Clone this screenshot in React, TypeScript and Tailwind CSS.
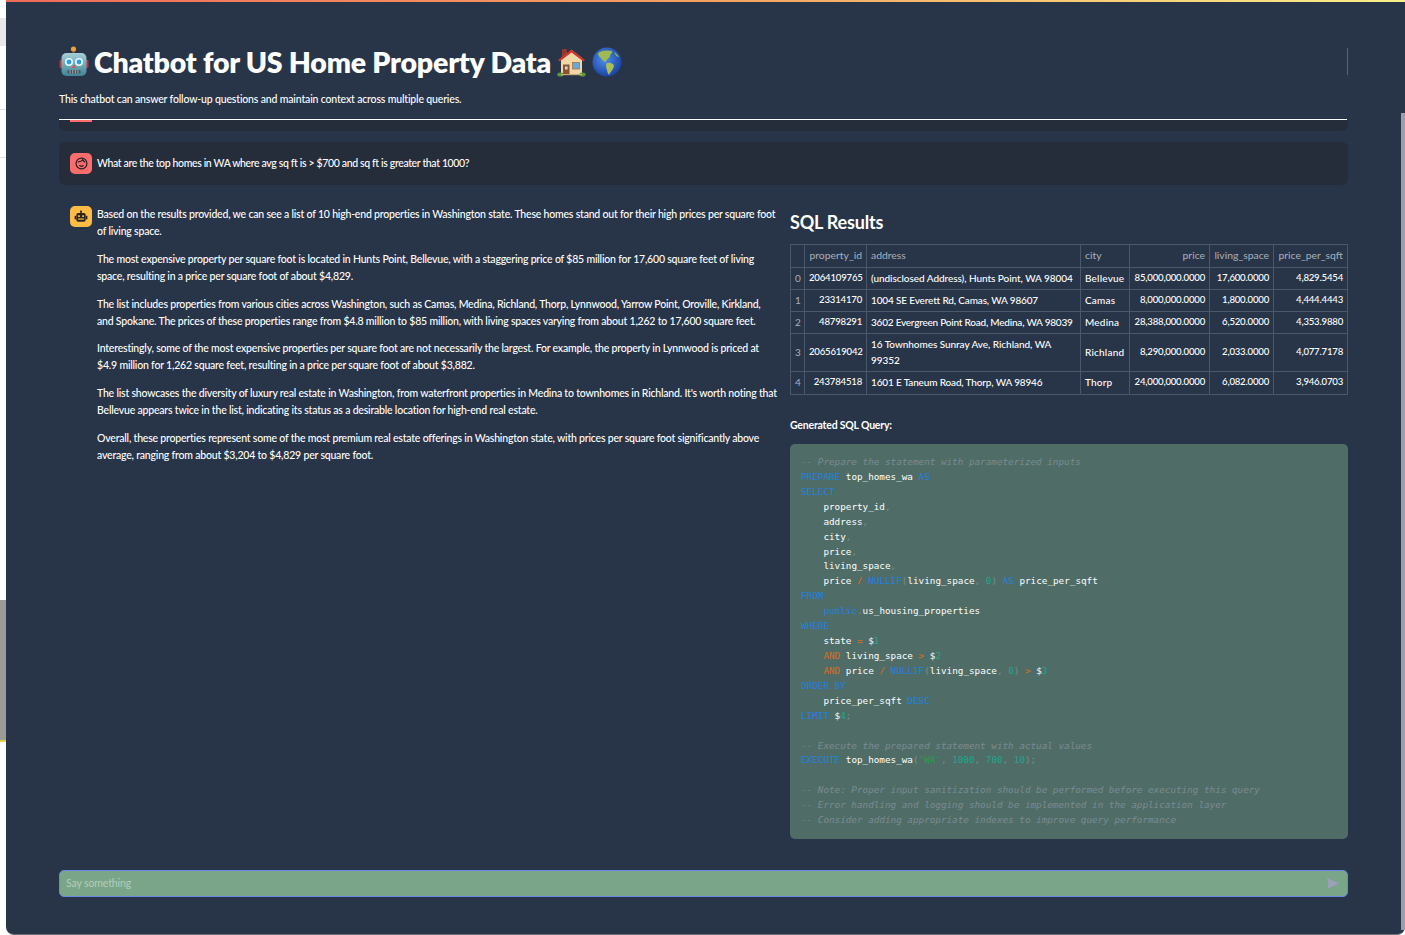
import React from 'react'

const sans = "font-['Lato','Noto_Sans',sans-serif]"

function RobotEmoji() {
  return (
    <svg width="30" height="32" viewBox="0 0 30 32" className="shrink-0">
      <defs>
        <linearGradient id="head" x1="0" y1="0" x2="0" y2="1">
          <stop offset="0" stopColor="#a5cfd6" />
          <stop offset="1" stopColor="#3f8496" />
        </linearGradient>
      </defs>
      <rect x="13.6" y="3" width="1.8" height="5" fill="#8a5a2b" />
      <circle cx="14.5" cy="3" r="2.6" fill="#f0a030" />
      <rect x="0.5" y="14" width="3" height="8" rx="1" fill="#b03a3a" />
      <rect x="26.5" y="14" width="3" height="8" rx="1" fill="#b03a3a" />
      <rect x="2.5" y="7" width="25" height="23" rx="5" fill="url(#head)" />
      <circle cx="10" cy="16" r="4" fill="#e8f6fa" />
      <circle cx="20" cy="16" r="4" fill="#e8f6fa" />
      <circle cx="10" cy="16" r="2.4" fill="#2da0e0" />
      <circle cx="20" cy="16" r="2.4" fill="#2da0e0" />
      <path d="M15 18.5 L17 22 L13 22 Z" fill="#d9534f" />
      <rect x="8.5" y="24" width="13" height="3.4" rx="1" fill="#47545c" />
      <path d="M11 24v3.4M13.7 24v3.4M16.4 24v3.4M19 24v3.4" stroke="#b8c4c8" strokeWidth="0.8" />
    </svg>
  )
}

function HouseEmoji() {
  return (
    <svg width="29" height="30" viewBox="0 0 29 30" className="shrink-0">
      <rect x="5" y="2" width="5" height="8" fill="#8f3a30" />
      <path d="M4 11 L14.5 3 L25 11 L25 27 L4 27 Z" fill="#f1d6a8" />
      <path d="M1 13 L14.5 2.5 L28 13 L26.5 14.5 L14.5 5.5 L2.5 14.5 Z" fill="#c9362f" />
      <rect x="6" y="17.5" width="6.5" height="10" fill="#8a5230" />
      <rect x="8" y="19.5" width="2.6" height="3" fill="#c9dbe4" />
      <rect x="15.5" y="15.5" width="7" height="6.5" fill="#6aa7d6" stroke="#a5764a" strokeWidth="0.8" />
      <ellipse cx="3.5" cy="27.5" rx="3.2" ry="2" fill="#5d9a3c" />
      <ellipse cx="25.5" cy="27.5" rx="3.2" ry="2" fill="#5d9a3c" />
      <rect x="4" y="27" width="21" height="1.2" fill="#c8a878" />
    </svg>
  )
}

function GlobeEmoji() {
  return (
    <svg width="30" height="30" viewBox="0 0 30 30" className="shrink-0">
      <defs>
        <radialGradient id="sea" cx="0.42" cy="0.4" r="0.65">
          <stop offset="0" stopColor="#4f8ff0" />
          <stop offset="1" stopColor="#173f9c" />
        </radialGradient>
      </defs>
      <circle cx="15" cy="15" r="14.5" fill="url(#sea)" />
      <path d="M6 6 C10 3 16 3 20 4 C21 6 18 7 18 9 C17 12 14 12 14 15 C12 15 10 13 9 11 C7 10 6 8 6 6 Z" fill="#9dbb4e" />
      <path d="M15 16 C18 15 22 17 22 19 C21 23 18 25 17 28 C15 26 15 22 14 20 C14 18 14 17 15 16 Z" fill="#a9bf55" />
      <path d="M22 5 C24 6 26 8 27 10 C25 10 23 8 22 5 Z" fill="#8fb04a" />
    </svg>
  )
}

function UserAvatar() {
  return (
    <div className="flex h-[21px] w-[22px] shrink-0 items-center justify-center rounded-[5px] bg-[#ff6c6c]">
      <svg width="13" height="13" viewBox="0 0 24 24" fill="none" stroke="#1f1f2b" strokeWidth="2.2" strokeLinecap="round">
        <circle cx="12" cy="12" r="10" />
        <path d="M6 9c3 0 6-1 8-4 1 2 2 3 4 4" />
        <path d="M9 16c2 1.5 4 1.5 6 0" />
      </svg>
    </div>
  )
}

function BotAvatar() {
  return (
    <div className="flex h-[21px] w-[22px] shrink-0 items-center justify-center rounded-[5px] bg-[#ffbd45]">
      <svg width="14" height="14" viewBox="0 0 24 24">
        <rect x="4" y="5" width="16" height="15" rx="3" fill="#2b2620" />
        <rect x="1" y="10" width="3" height="6" fill="#2b2620" />
        <rect x="20" y="10" width="3" height="6" fill="#2b2620" />
        <rect x="10.5" y="1" width="3" height="4" fill="#2b2620" />
        <rect x="7" y="9" width="3" height="3" fill="#ffbd45" />
        <rect x="14" y="9" width="3" height="3" fill="#ffbd45" />
        <rect x="7" y="14.5" width="10" height="2" fill="#ffbd45" />
      </svg>
    </div>
  )
}

const K = ({ children }: { children: React.ReactNode }) => <span className="text-[#1f80e0]">{children}</span>
const C = ({ children }: { children: React.ReactNode }) => <span className="italic text-[#7c8a94]">{children}</span>
const N = ({ children }: { children: React.ReactNode }) => <span className="text-[#1ea592]">{children}</span>
const P = ({ children }: { children: React.ReactNode }) => <span className="text-[#7a8e90]">{children}</span>
const O = ({ children }: { children: React.ReactNode }) => <span className="text-[#dc6c1c]">{children}</span>

const rows = [
  { i: 0, id: '2064109765', address: '(undisclosed Address), Hunts Point, WA 98004', addrCls: 'tracking-[-0.05px]', city: 'Bellevue', price: '85,000,000.0000', space: '17,600.0000', ppsf: '4,829.5454', h: 'h-[22px]' },
  { i: 1, id: '23314170', address: '1004 SE Everett Rd, Camas, WA 98607', addrCls: 'tracking-[-0.15px]', city: 'Camas', price: '8,000,000.0000', space: '1,800.0000', ppsf: '4,444.4443', h: 'h-[22px]' },
  { i: 2, id: '48798291', address: '3602 Evergreen Point Road, Medina, WA 98039', addrCls: 'tracking-[-0.22px]', city: 'Medina', price: '28,388,000.0000', space: '6,520.0000', ppsf: '4,353.9880', h: 'h-[22px]' },
  { i: 3, id: '2065619042', address: '16 Townhomes Sunray Ave, Richland, WA', address2: '99352', addrCls: 'tracking-[-0.05px]', city: 'Richland', price: '8,290,000.0000', space: '2,033.0000', ppsf: '4,077.7178', h: 'h-[38px]' },
  { i: 4, id: '243784518', address: '1601 E Taneum Road, Thorp, WA 98946', addrCls: 'tracking-[-0.15px]', city: 'Thorp', price: '24,000,000.0000', space: '6,082.0000', ppsf: '3,946.0703', h: 'h-[23px]' },
]

const td = 'border border-[#4a586b] px-[4px] pt-0 pb-[2px] align-middle whitespace-nowrap'
const th = 'border border-[#4a586b] px-[4px] pt-0 pb-[3px] align-middle whitespace-nowrap font-normal'
const num = 'text-right text-[9.6px] tracking-[-0.2px]'

function ResultsTable() {
  return (
    <table className="w-[557px] table-fixed border-collapse text-[10px] font-medium leading-[16px] text-white">
      <colgroup>
        <col className="w-[14px]" />
        <col className="w-[62px]" />
        <col className="w-[214px]" />
        <col className="w-[49px]" />
        <col className="w-[80px]" />
        <col className="w-[64px]" />
        <col className="w-[74px]" />
      </colgroup>
      <thead className="text-[#a9b1bc]">
        <tr className="h-[23px] text-[10.4px]">
          <th className={th}></th>
          <th className={`${th} text-right`}>property_id</th>
          <th className={`${th} text-left`}>address</th>
          <th className={`${th} text-left`}>city</th>
          <th className={`${th} text-right`}>price</th>
          <th className={`${th} text-right`}>living_space</th>
          <th className={`${th} text-right`}>price_per_sqft</th>
        </tr>
      </thead>
      <tbody>
        {rows.map(r => (
          <tr key={r.i} className={r.h}>
            <td className={`${td} text-center font-normal text-[#a9b1bc]`}>{r.i}</td>
            <td className={`${td} ${num}`}>{r.id}</td>
            <td className={`${td} ${r.addrCls}`}>
              {r.address}
              {r.address2 && <br />}
              {r.address2}
            </td>
            <td className={`${td} tracking-[0.2px]`}>{r.city}</td>
            <td className={`${td} ${num}`}>{r.price}</td>
            <td className={`${td} ${num}`}>{r.space}</td>
            <td className={`${td} ${num}`}>{r.ppsf}</td>
          </tr>
        ))}
      </tbody>
    </table>
  )
}

function SqlBlock() {
  return (
    <pre className="mt-[10px] h-[395px] w-[558px] rounded-[5px] bg-[#4f6d66] px-[11px] pt-[11px] font-['DejaVu_Sans_Mono',monospace] text-[9.3px] leading-[14.92px] text-white">
      <C>-- Prepare the statement with parameterized inputs</C>{'\n'}
      <K>PREPARE</K> top_homes_wa <K>AS</K>{'\n'}
      <K>SELECT</K>{'\n'}
      {'    '}property_id<P>,</P>{'\n'}
      {'    '}address<P>,</P>{'\n'}
      {'    '}city<P>,</P>{'\n'}
      {'    '}price<P>,</P>{'\n'}
      {'    '}living_space<P>,</P>{'\n'}
      {'    '}price <O>/</O> <K>NULLIF</K><P>(</P>living_space<P>,</P> <N>0</N><P>)</P> <K>AS</K> price_per_sqft{'\n'}
      <K>FROM</K>{'\n'}
      {'    '}<K>public</K><P>.</P>us_housing_properties{'\n'}
      <K>WHERE</K>{'\n'}
      {'    '}state <O>=</O> $<N>1</N>{'\n'}
      {'    '}<O>AND</O> living_space <O>&gt;</O> $<N>2</N>{'\n'}
      {'    '}<O>AND</O> price <O>/</O> <K>NULLIF</K><P>(</P>living_space<P>,</P> <N>0</N><P>)</P> <O>&gt;</O> $<N>3</N>{'\n'}
      <K>ORDER BY</K>{'\n'}
      {'    '}price_per_sqft <K>DESC</K>{'\n'}
      <K>LIMIT</K> $<N>4</N><P>;</P>{'\n'}
      {'\n'}
      <C>-- Execute the prepared statement with actual values</C>{'\n'}
      <K>EXECUTE</K> top_homes_wa<P>(</P><span className="text-[#1fa24a]">'WA'</span><P>,</P> <N>1000</N><P>,</P> <N>700</N><P>,</P> <N>10</N><P>);</P>{'\n'}
      {'\n'}
      <C>-- Note: Proper input sanitization should be performed before executing this query</C>{'\n'}
      <C>-- Error handling and logging should be implemented in the application layer</C>{'\n'}
      <C>-- Consider adding appropriate indexes to improve query performance</C>
    </pre>
  )
}

const paragraphs = [
  ['Based on the results provided, we can see a list of 10 high-end properties in Washington state. These homes stand out for their high prices per square foot', 'of living space.'],
  ['The most expensive property per square foot is located in Hunts Point, Bellevue, with a staggering price of $85 million for 17,600 square feet of living', 'space, resulting in a price per square foot of about $4,829.'],
  ['The list includes properties from various cities across Washington, such as Camas, Medina, Richland, Thorp, Lynnwood, Yarrow Point, Oroville, Kirkland,', 'and Spokane. The prices of these properties range from $4.8 million to $85 million, with living spaces varying from about 1,262 to 17,600 square feet.'],
  ['Interestingly, some of the most expensive properties per square foot are not necessarily the largest. For example, the property in Lynnwood is priced at', '$4.9 million for 1,262 square feet, resulting in a price per square foot of about $3,882.'],
  ["The list showcases the diversity of luxury real estate in Washington, from waterfront properties in Medina to townhomes in Richland. It's worth noting that", 'Bellevue appears twice in the list, indicating its status as a desirable location for high-end real estate.'],
  ['Overall, these properties represent some of the most premium real estate offerings in Washington state, with prices per square foot significantly above', 'average, ranging from about $3,204 to $4,829 per square foot.'],
]

export default function App() {
  return (
    <div className={`flex h-[935px] w-[1405px] overflow-hidden bg-white text-white ${sans}`}>
      {/* desktop peeking out on the left */}
      <div className="flex w-[6px] shrink-0 flex-col bg-white">
        <div className="h-[18px]" />
        <div className="h-[28px] bg-[#e8e8e8]" />
        <div className="h-[64px] border-b border-[#dcdcdc]" />
        <div className="h-[48px] border-b border-[#e2e2e2]" />
        <div className="h-[442px]" />
        <div className="h-[140px] bg-[#9a9c98]" />
        <div className="h-[2px] bg-[#e6d24a]" />
      </div>

      <div className="relative flex min-w-0 flex-1 flex-col rounded-b-[8px] border-b border-[#6a6f78] bg-[#283548]">
        <div className="h-[2px] shrink-0 bg-gradient-to-r from-[#f06a5a] via-[#f4a060] to-[#f8f08a]" />
        <div className="absolute right-0 top-[113px] bottom-[4px] w-[4px] bg-[#9a9dab]" />
        <div className="absolute left-[1341px] top-[48px] h-[27px] w-px bg-[#56657a]" />

        <div className="flex min-h-0 flex-1 flex-col pl-[53px] pr-[57px]">
          <div className="mr-[1px] flex h-[118px] shrink-0 flex-col border-b border-white pt-[44px]">
            <h1 className="flex h-[32px] items-center text-[28.5px] font-extrabold leading-none tracking-[-0.2px]">
              <RobotEmoji />
              <span className="ml-[5px] whitespace-nowrap">Chatbot for US Home Property Data</span>
              <span className="ml-[6px]"><HouseEmoji /></span>
              <span className="ml-[6px]"><GlobeEmoji /></span>
            </h1>
            <p className="mt-[13px] text-[10.5px] font-medium leading-[17px] tracking-[-0.16px]">
              This chatbot can answer follow-up questions and maintain context across multiple queries.
            </p>
          </div>

          <div className="h-[11px] shrink-0 rounded-b-[6px] bg-[#262d3a] pl-[11px]">
            <div className="h-[2px] w-[22px] bg-[#ff6c6c]" />
          </div>

          <div className="mt-[11px] flex h-[43px] shrink-0 items-center gap-[5px] rounded-[6px] bg-[#262d3a] pl-[11px] text-[10.5px] font-medium tracking-[-0.36px]">
            <UserAvatar />
            What are the top homes in WA where avg sq ft is &gt; $700 and sq ft is greater that 1000?
          </div>

          <div className="mt-[20px] flex shrink-0">
            <div className="flex w-[731px] shrink-0 gap-[5px] pl-[11px]">
              <div className="mt-[1px]">
                <BotAvatar />
              </div>
              <div className="mt-[1px] flex flex-col gap-[10.8px] whitespace-nowrap text-[10.5px] font-medium leading-[17px] tracking-[-0.2px]">
                {paragraphs.map(p => (
                  <p key={p[0]}>
                    {p[0]}
                    <br />
                    {p[1]}
                  </p>
                ))}
              </div>
            </div>
            <div className="-mt-[1px] w-[558px] shrink-0">
              <h2 className="text-[18px] font-bold leading-[36px] tracking-[-0.2px]">SQL Results</h2>
              <div className="mt-[4px]">
                <ResultsTable />
              </div>
              <p className="mt-[22px] text-[10.5px] font-bold leading-[17px] tracking-[-0.2px]">Generated SQL Query:</p>
              <SqlBlock />
            </div>
          </div>

          <div className="mt-[31px] flex h-[27px] shrink-0 items-center justify-between rounded-[5px] border border-[#6b85e8] bg-[#7aa588] pl-[6px] pr-[8px] text-[10.5px] tracking-[-0.13px] text-[#b4cdb9]">
            Say something
            <svg width="12" height="11" viewBox="0 0 12 11">
              <path d="M0 0 L12 5.5 L0 11 L1.5 5.5 Z" fill="#9ca0b8" />
            </svg>
          </div>
        </div>
      </div>
    </div>
  )
}
